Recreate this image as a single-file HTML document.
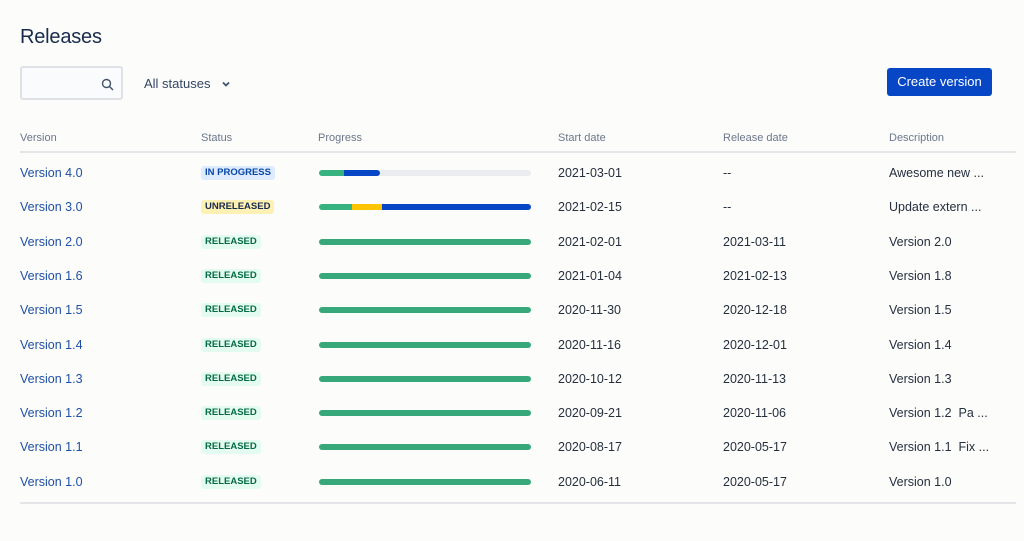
<!DOCTYPE html>
<html><head><style>
body{margin:0;width:1024px;height:541px;background:#fcfcfb;font-family:"Liberation Sans",sans-serif;color:#172b4d;position:relative;overflow:hidden}
.a{position:absolute;white-space:nowrap}
h1{position:absolute;left:20px;top:26px;margin:0;font-size:20px;font-weight:normal;color:#172b4d;letter-spacing:-0.2px}
.search{position:absolute;left:20px;top:66px;width:103px;height:34px;border:2px solid #dfe1e6;border-radius:3px;background:#fafbfc;box-sizing:border-box}
.btn{position:absolute;left:887px;top:68px;width:105px;height:28px;background:#0747c6;border-radius:3px;color:#fff;font-size:13px;text-align:center;line-height:28px}
.th{font-size:11px;color:#6b778c;top:132px}
.line{position:absolute;left:20px;width:996px;height:2px;background:#e4e5e8}
.v{font-size:12.5px;color:#1e4fa6}
.t{font-size:12.5px;color:#252f3e}
.b{font-size:9.5px;font-weight:bold;padding:0 4px;height:14px;line-height:14px;border-radius:3px;letter-spacing:0}
.rel{background:#e3fcef;color:#066b45}
.bar{position:absolute;left:319px;width:212px;height:6px;border-radius:3px;overflow:hidden;background:#ebecf0;display:flex}
</style></head><body>
<h1>Releases</h1>
<div class="search"><svg style="position:absolute;left:79px;top:10px" width="13" height="13" viewBox="0 0 13 13"><circle cx="5.5" cy="5.5" r="4" fill="none" stroke="#42526e" stroke-width="1.4"/><path d="M8.5 8.5L12 12" stroke="#42526e" stroke-width="1.4"/></svg></div>
<div class="a" style="left:144px;top:76px;font-size:13px;color:#344563">All statuses</div>
<svg class="a" style="left:221px;top:80px" width="10" height="8" viewBox="0 0 10 8"><path d="M2 2.5L5 5.5L8 2.5" fill="none" stroke="#42526e" stroke-width="1.8"/></svg>
<div class="btn">Create version</div>
<div class="a th" style="left:20px">Version</div>
<div class="a th" style="left:201px">Status</div>
<div class="a th" style="left:318px">Progress</div>
<div class="a th" style="left:558px">Start date</div>
<div class="a th" style="left:723px">Release date</div>
<div class="a th" style="left:889px">Description</div>
<div class="line" style="top:151px"></div>
<div class="line" style="top:502px"></div>
<div id="rows"></div>
<script>
var d=[["4.0","IN PROGRESS","2021-03-01","--","Awesome new ..."],["3.0","UNRELEASED","2021-02-15","--","Update extern ..."],["2.0","R","2021-02-01","2021-03-11","Version 2.0"],["1.6","R","2021-01-04","2021-02-13","Version 1.8"],["1.5","R","2020-11-30","2020-12-18","Version 1.5"],["1.4","R","2020-11-16","2020-12-01","Version 1.4"],["1.3","R","2020-10-12","2020-11-13","Version 1.3"],["1.2","R","2020-09-21","2020-11-06","Version 1.2&nbsp; Pa ..."],["1.1","R","2020-08-17","2020-05-17","Version 1.1&nbsp; Fix ..."],["1.0","R","2020-06-11","2020-05-17","Version 1.0"]];
var h="";
d.forEach(function(r,i){var y=173+i*34.3;var ty=y-7;
h+='<div class="a v" style="left:20px;top:'+ty+'px">Version '+r[0]+'</div>';
var bt=r[1];if(bt=="R")bt="RELEASED";
var st=i==0?'background:#deebff;color:#0747a6':i==1?'background:#fff0b3;color:#172b4d':'';
h+='<div class="a b '+(i>1?'rel':'')+'" style="left:201px;top:'+(y-7)+'px;'+st+'">'+bt+'</div>';
var bar=i==0?'<div style="width:25px;background:#36b37e"></div><div style="width:36px;background:#0747c6;border-radius:0 3px 3px 0"></div>':i==1?'<div style="width:33px;background:#36b37e"></div><div style="width:30px;background:#ffc400"></div><div style="flex:1;background:#0747c6"></div>':'<div style="flex:1;background:#36a879"></div>';
h+='<div class="bar" style="top:'+(y-3)+'px">'+bar+'</div>';
h+='<div class="a t" style="left:558px;top:'+ty+'px">'+r[2]+'</div>';
h+='<div class="a t" style="left:723px;top:'+ty+'px">'+r[3]+'</div>';
h+='<div class="a t" style="left:889px;top:'+ty+'px">'+r[4]+'</div>';});
document.getElementById("rows").innerHTML=h;
</script>
</body></html>
